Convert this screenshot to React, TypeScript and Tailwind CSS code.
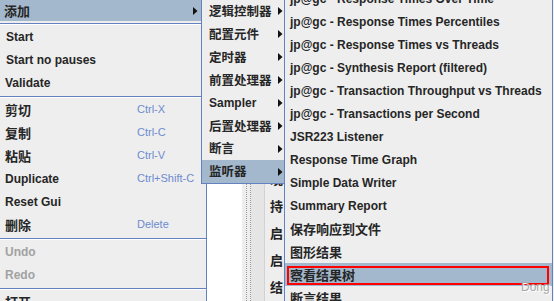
import React from 'react';

const LATIN = "font-['Liberation_Sans',Arial,sans-serif]";
const CJK = "font-['Noto_Sans_CJK_SC','Liberation_Sans',sans-serif]";

interface ItemProps {
  label: string;
  cjk?: boolean;
  shortcut?: string;
  arrow?: string;
  active?: boolean;
  disabled?: boolean;
  h?: string;
  pad?: string;
  labelW?: string;
  size?: string;
}

function Item({ label, cjk, shortcut, arrow, active, disabled, h = 'h-[23px]', pad = 'pl-[5px]', labelW, size }: ItemProps) {
  return (
    <div className={`relative ${h} ${pad} flex items-center ${active ? 'bg-[#a3b8cc]' : ''}`}>
      <span
        className={`${labelW ?? ''} whitespace-nowrap font-bold leading-none ${cjk ? `${CJK} ${size ?? 'text-[13px]'}` : `${LATIN} text-[12px]`} ${
          disabled ? 'text-[#a2a2a2]' : 'text-[#262626]'
        }`}
      >
        {label}
      </span>
      {shortcut && <span className={`${LATIN} text-[11px] leading-none text-[#6d8bcf] whitespace-nowrap`}>{shortcut}</span>}
      {arrow && (
        <svg width="5" height="8" viewBox="0 0 5 8" className={`absolute top-1/2 -translate-y-1/2 ${arrow}`}>
          <path d="M0 0 L4.5 4 L0 8 Z" fill="#111" />
        </svg>
      )}
    </div>
  );
}

function Sep() {
  return (
    <div className="h-[4px] flex flex-col pt-[2px]">
      <div className="h-px bg-[#6382bf]" />
      <div className="h-px bg-white" />
    </div>
  );
}

const listeners: { label: string; cjk?: boolean; active?: boolean }[] = [
  { label: 'jp@gc - Response Times Over Time' },
  { label: 'jp@gc - Response Times Percentiles' },
  { label: 'jp@gc - Response Times vs Threads' },
  { label: 'jp@gc - Synthesis Report (filtered)' },
  { label: 'jp@gc - Transaction Throughput vs Threads' },
  { label: 'jp@gc - Transactions per Second' },
  { label: 'JSR223 Listener' },
  { label: 'Response Time Graph' },
  { label: 'Simple Data Writer' },
  { label: 'Summary Report' },
  { label: '保存响应到文件', cjk: true },
  { label: '图形结果', cjk: true },
  { label: '察看结果树', cjk: true, active: true },
  { label: '断言结果', cjk: true },
];

const addSub = ['逻辑控制器', '配置元件', '定时器', '前置处理器', 'Sampler', '后置处理器', '断言', '监听器'];

export default function App() {
  return (
    <div className="relative w-[554px] h-[301px] overflow-hidden bg-[#eeeeee]">
      {/* window behind the popup menus */}
      <div className="flex h-full">
        <div className="w-[207px]" />
        <div className="w-[35px] bg-white" />
        <div className="w-[4px]" />
        <div className="w-[5px] border-x border-dotted border-[#9a9a9a]" />
        <div className="w-[14px] bg-[#e5e5e5] border-r border-[#d2d2d2]" />
        <div className="w-[19px] overflow-hidden flex flex-col pt-[165px] pl-[5px]">
          {['晚', '持', '启', '启', '结'].map((t, i) => (
            <div key={i} className={`h-[27px] flex items-center ${CJK} text-[13px] font-bold text-[#222] whitespace-nowrap`}>
              {t}
            </div>
          ))}
        </div>
        <div className="flex-1" />
      </div>

      {/* context menu */}
      <div className="absolute left-0 top-0 w-[207px] h-[320px] border-r border-[#6382bf] bg-[#eeeeee] flex flex-col">
        <Item label="添加" cjk arrow="right-[8px]" active h="h-[21px]" pad="pl-[4px]" />
        <Sep />
        <Item label="Start" pad="pl-[6px]" />
        <Item label="Start no pauses" pad="pl-[6px]" />
        <Item label="Validate" />
        <Sep />
        <Item label="剪切" cjk shortcut="Ctrl-X" labelW="w-[132px]" />
        <Item label="复制" cjk shortcut="Ctrl-C" labelW="w-[132px]" />
        <Item label="粘贴" cjk shortcut="Ctrl-V" labelW="w-[132px]" />
        <Item label="Duplicate" shortcut="Ctrl+Shift-C" labelW="w-[132px]" />
        <Item label="Reset Gui" />
        <Item label="删除" cjk shortcut="Delete" labelW="w-[132px]" />
        <Sep />
        <Item label="Undo" disabled />
        <Item label="Redo" disabled />
        <Sep />
        <Item label="打开" cjk />
      </div>

      {/* 添加 submenu */}
      <div className="absolute left-[201px] top-[-1px] w-[84px] h-[185px] border border-[#6382bf] bg-[#eeeeee] flex flex-col">
        {addSub.map((s) => (
          <Item
            key={s}
            label={s}
            cjk={s !== 'Sampler'}
            size="text-[12.5px]"
            arrow="right-[1px]"
            active={s === '监听器'}
            pad="pl-[7px]"
          />
        ))}
      </div>

      {/* 监听器 submenu */}
      <div className="absolute left-[284px] top-[-14px] w-[269px] h-[330px] border border-[#6382bf] bg-[#eeeeee] flex flex-col">
        {listeners.map((l) => (
          <Item key={l.label} label={l.label} cjk={l.cjk} active={l.active} pad="pl-[5px]" />
        ))}
      </div>

      {/* annotation box */}
      <div className="absolute left-[287px] top-[266px] w-[262px] h-[19px] border-2 border-[#ff0000]" />

      <div
        className={`absolute left-[521px] top-[281px] ${LATIN} text-[12px] leading-none text-[#a8a8a8] [text-shadow:1px_1px_0_#ffffff]`}
      >
        Dong
      </div>
    </div>
  );
}
